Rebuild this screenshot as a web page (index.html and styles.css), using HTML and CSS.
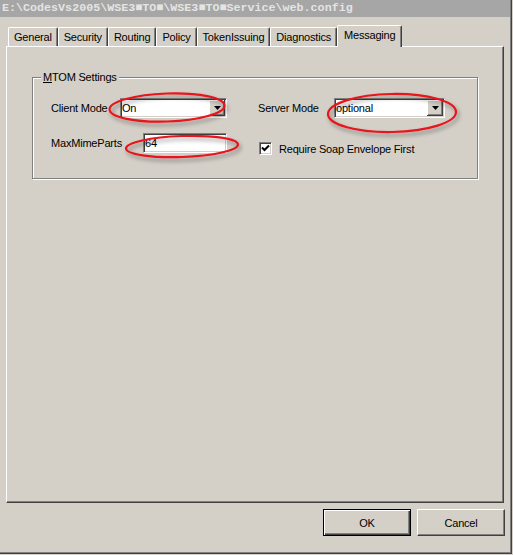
FILE: index.html
```html
<!DOCTYPE html>
<html>
<head>
<meta charset="utf-8">
<title>web.config</title>
<link rel="stylesheet" href="styles.css">
</head>
<body>
<div class="window">
  <div class="titlebar">E:\CodesVs2005\WSE3■TO■\WSE3■TO■Service\web.config</div>
  <div class="tabs">
    <div class="tab">General</div>
    <div class="tab">Security</div>
    <div class="tab">Routing</div>
    <div class="tab">Policy</div>
    <div class="tab">TokenIssuing</div>
    <div class="tab">Diagnostics</div>
    <div class="tab active">Messaging</div>
  </div>
  <div class="panel">
    <fieldset class="group">
      <legend><u>M</u>TOM Settings</legend>
      <div class="row row1">
        <span class="lbl lbl-client">Client Mode</span>
        <div class="combo combo-client">
          <span class="val">On</span>
          <span class="drop"><svg width="7" height="4" viewBox="0 0 7 4"><polygon points="0,0 7,0 3.5,4" fill="#000"/></svg></span>
        </div>
        <span class="lbl lbl-server">Server Mode</span>
        <div class="combo combo-server">
          <span class="val">optional</span>
          <span class="drop"><svg width="7" height="4" viewBox="0 0 7 4"><polygon points="0,0 7,0 3.5,4" fill="#000"/></svg></span>
        </div>
      </div>
      <div class="row row2">
        <span class="lbl lbl-max">MaxMimeParts</span>
        <div class="textbox">64</div>
        <div class="check">
          <span class="box"><svg width="9" height="9" viewBox="0 0 9 9"><polyline points="1,3.5 3.5,6 8,1.5" fill="none" stroke="#000" stroke-width="2"/></svg></span>
          <span class="check-lbl">Require Soap Envelope First</span>
        </div>
      </div>
    </fieldset>
  </div>
  <div class="actions">
    <button class="btn default">OK</button>
    <button class="btn">Cancel</button>
  </div>
  <svg class="annot" width="513" height="555" viewBox="0 0 513 555">
    <defs>
      <filter id="sh" x="-20%" y="-60%" width="140%" height="220%">
        <feGaussianBlur in="SourceAlpha" stdDeviation="2"/>
        <feOffset dx="2" dy="3"/>
        <feComponentTransfer><feFuncA type="linear" slope="0.4"/></feComponentTransfer>
        <feMerge><feMergeNode/><feMergeNode in="SourceGraphic"/></feMerge>
      </filter>
    </defs>
    <g fill="none" stroke="#e8141b" stroke-width="2.2" filter="url(#sh)">
      <ellipse cx="167" cy="107.5" rx="57.5" ry="14" transform="rotate(-2 167 107.5)"/>
      <ellipse cx="182" cy="146.5" rx="56" ry="10.5" transform="rotate(-2 182 146.5)"/>
      <ellipse cx="392" cy="113" rx="64" ry="19" transform="rotate(-1 392 113)"/>
    </g>
  </svg>
</div>
</body>
</html>
```
FILE: styles.css
```css
* { box-sizing: border-box; }
html, body { margin: 0; padding: 0; background: #d4d0c8; }
body {
  font-family: "Liberation Sans", Arial, sans-serif;
  font-size: 11px;
  letter-spacing: -0.2px;
  color: #000;
}
.window {
  position: relative;
  width: 512px;
  height: 554px;
  border-right: 1px solid #404040;
  border-bottom: 1px solid #404040;
  box-shadow: inset -1px -1px 0 #808080;
  display: flex;
  flex-direction: column;
}
.titlebar {
  height: 17px;
  margin-right: 1px;
  background: #a6a6a6;
  color: #e4e4e4;
  font-family: "Liberation Mono", "DejaVu Sans Mono", monospace;
  font-weight: bold;
  font-size: 11.7px;
  letter-spacing: 0;
  line-height: 17px;
  padding-left: 2px;
  white-space: nowrap;
  overflow: hidden;
}
.tabs {
  display: flex;
  align-items: flex-end;
  height: 29px;
  padding: 8px 0 0 8px;
}
.tab {
  height: 19px;
  padding: 1px 5px 0;
  line-height: 17px;
  border-top: 1px solid #fff;
  border-left: 1px solid #fff;
  border-right: 1px solid #404040;
  border-top-left-radius: 2px;
  border-top-right-radius: 2px;
  box-shadow: inset -1px 0 0 #808080;
  white-space: nowrap;
}
.tab.active {
  height: 22px;
  margin-bottom: -1px;
  padding: 1px 6px 0;
  position: relative;
  z-index: 1;
  background: #d4d0c8;
}
.panel {
  margin-left: 6px;
  width: 498px;
  height: 457px;
  border-top: 1px solid #fff;
  border-left: 1px solid #fff;
  border-right: 1px solid #404040;
  border-bottom: 1px solid #404040;
  box-shadow: inset -1px -1px 0 #808080;
  padding-left: 25px;
}
.group {
  margin: 24px 0 0 0;
  width: 446px;
  padding: 0 0 23px 0;
  border: 1px solid #808080;
  box-shadow: 1px 1px 0 #fff, inset 1px 1px 0 #fff;
  min-width: 0;
}
.group legend {
  margin-left: 8px;
  padding: 0 2px;
  line-height: 13px;
  background: #d4d0c8;
}
.row {
  display: flex;
  margin-left: 18px;
}
.row1 {
  margin-top: 14px;
  height: 20px;
  align-items: center;
}
.row2 {
  margin-top: 15px;
  height: 22px;
  align-items: flex-start;
}
.lbl { flex: none; white-space: nowrap; }
.lbl-client { width: 69px; }
.lbl-server { width: 76px; margin-left: 31px; }
.lbl-max { width: 92px; line-height: 20px; }
.combo, .textbox {
  height: 20px;
  background: #fff;
  border: 1px solid;
  border-color: #808080 #fff #fff #808080;
  box-shadow: inset 1px 1px 0 #404040, inset -1px -1px 0 #d4d0c8;
  padding: 1px;
}
.combo { display: flex; align-items: center; }
.combo-client { width: 107px; }
.combo-server { width: 111px; }
.val { flex: 1; line-height: 16px; white-space: nowrap; }
.drop {
  flex: none;
  width: 16px;
  height: 16px;
  background: #d4d0c8;
  box-shadow: inset -1px -1px 0 #404040, inset 1px 1px 0 #fff, inset -2px -2px 0 #808080;
  display: flex;
  align-items: center;
  justify-content: center;
  padding-bottom: 1px;
}
.drop svg { display: block; }
.textbox {
  width: 84px;
  line-height: 16px;
}
.check {
  display: flex;
  align-items: center;
  margin-left: 32px;
  margin-top: 9px;
}
.box {
  width: 13px;
  height: 13px;
  background: #fff;
  border: 1px solid;
  border-color: #808080 #fff #fff #808080;
  box-shadow: inset 1px 1px 0 #404040, inset -1px -1px 0 #d4d0c8;
  display: flex;
  align-items: center;
  justify-content: center;
}
.box svg { display: block; }
.check-lbl { margin-left: 7px; white-space: nowrap; }
.actions {
  display: flex;
  justify-content: flex-end;
  gap: 6px;
  padding-right: 6px;
  margin-top: 6px;
}
.btn {
  width: 88px;
  height: 27px;
  margin: 0;
  padding: 0;
  font-family: "Liberation Sans", Arial, sans-serif;
  font-size: 11px;
  letter-spacing: -0.2px;
  color: #000;
  background: #d4d0c8;
  border: 1px solid;
  border-color: #fff #404040 #404040 #fff;
  box-shadow: inset -1px -1px 0 #808080;
}
.btn.default {
  border-color: #000;
  box-shadow: inset 1px 1px 0 #fff, inset -1px -1px 0 #404040, inset -2px -2px 0 #808080;
}
.annot {
  position: absolute;
  left: 0;
  top: 0;
  pointer-events: none;
}
```
